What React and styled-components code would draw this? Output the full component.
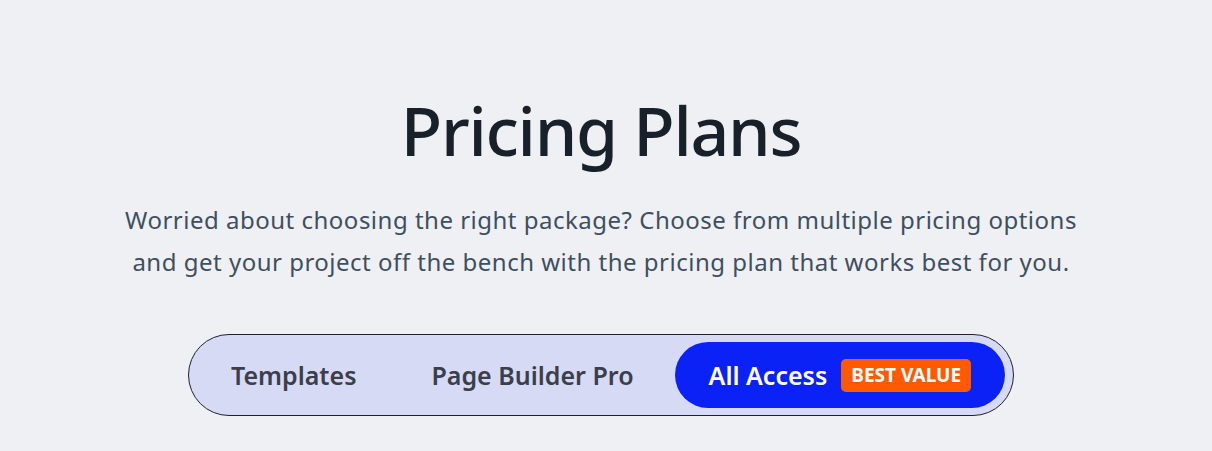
import React from "react";
import styled, { createGlobalStyle } from "styled-components";

const GlobalStyle = createGlobalStyle`
  html, body {
    margin: 0;
    padding: 0;
    background: #eff0f4;
  }
  body {
    font-family: "Noto Sans", "Open Sans", sans-serif;
  }
`;

const tabs = [
  { label: "Templates" },
  { label: "Page Builder Pro" },
  { label: "All Access", badge: "BEST VALUE", active: true },
];

const App = () => {
  return (
    <>
      <GlobalStyle />
      <Section>
        <Title>Pricing Plans</Title>
        <Lead>
          Worried about choosing the right package? Choose from multiple pricing options
          <br />
          and get your project off the bench with the pricing plan that works best for you.
        </Lead>
        <Toggle>
          {tabs.map((t) => (
            <Tab key={t.label} $active={t.active}>
              {t.label}
              {t.badge && <Badge>{t.badge}</Badge>}
            </Tab>
          ))}
        </Toggle>
      </Section>
    </>
  );
};

export default App;

const Section = styled.section`
  display: flex;
  flex-direction: column;
  align-items: center;
  padding: 86px 10px 0 0;
  height: 451px;
  box-sizing: border-box;
`;

const Title = styled.h1`
  margin: 0;
  font-size: 68px;
  font-weight: 500;
  line-height: 88px;
  color: #18202a;
  letter-spacing: -1.3px;
`;

const Lead = styled.p`
  margin: 25px 0 0;
  font-size: 24px;
  line-height: 42px;
  color: #3e4f5f;
  text-align: center;
  letter-spacing: 0.5px;
`;

const Toggle = styled.div`
  display: flex;
  align-items: center;
  gap: 7px;
  margin-top: 51px;
  padding: 7px 8px;
  border: 1px solid #1d2230;
  border-radius: 41px;
  background: #d7daf4;
`;

const Tab = styled.button`
  display: flex;
  align-items: center;
  gap: 14px;
  height: 66px;
  padding: 0 34px;
  border: none;
  border-radius: 33px;
  font-family: inherit;
  font-size: 25px;
  font-weight: 600;
  color: ${(p) => (p.$active ? "#ffffff" : "#3b3f4c")};
  background: ${(p) => (p.$active ? "#0a22f6" : "transparent")};
  cursor: pointer;
`;

const Badge = styled.span`
  display: inline-flex;
  align-items: center;
  height: 33px;
  padding: 0 10px;
  border-radius: 5px;
  background: #ff5a00;
  color: #ffffff;
  font-size: 19px;
  font-weight: 700;
`;
